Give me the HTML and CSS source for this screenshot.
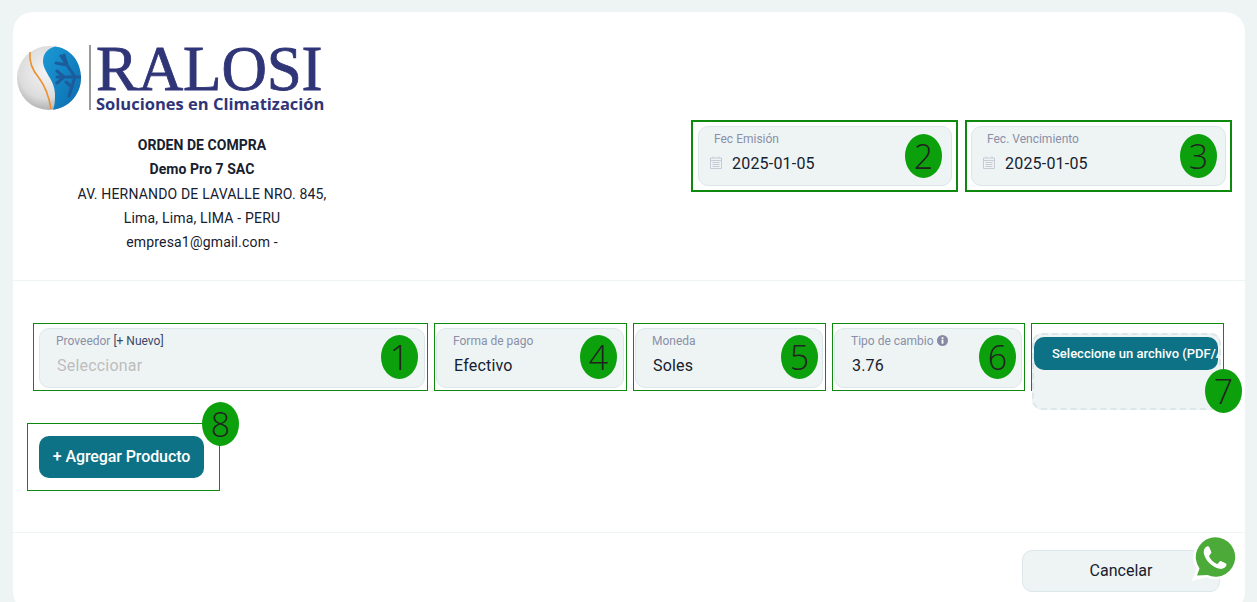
FILE: index.html
```html
<!DOCTYPE html>
<html lang="es">
<head>
  <meta charset="UTF-8">
  <meta name="viewport" content="width=device-width, initial-scale=1.0">
  <title>Orden de compra</title>
  <link rel="stylesheet" href="styles.css">
</head>
<body>
  <div class="card">

    <!-- Cabecera -->
    <section class="header">
      <div class="company">
        <div class="logo">
          <svg class="logo-ball" viewBox="0 0 64 64" width="64" height="64">
            <defs>
              <radialGradient id="ballGrey" cx="0.45" cy="0.4" r="0.7">
                <stop offset="0" stop-color="#f4f4f4"/>
                <stop offset="0.6" stop-color="#dcdcdc"/>
                <stop offset="1" stop-color="#9a9a9a"/>
              </radialGradient>
              <linearGradient id="ballBlue" x1="0" y1="0" x2="1" y2="1">
                <stop offset="0" stop-color="#1a9ad6"/>
                <stop offset="1" stop-color="#0b6cae"/>
              </linearGradient>
            </defs>
            <circle cx="32" cy="32" r="32" fill="url(#ballGrey)"/>
            <path d="M38 0.5C30 3 26 8 26 15C26 26 38 34 38 48C38 54 38 59 36 63.7C52 62 64 48 64 32C64 15 53 2 38 0.5Z" fill="url(#ballBlue)"/>
            <path d="M13 6C12 16 15 24 22 32C28 40 32 50 34 63" fill="none" stroke="#ee8f2e" stroke-width="1.6"/>
            <g fill="none" stroke="#1d5c9c" stroke-width="3" stroke-linecap="round">
              <path d="M64 31L40 31M47 31L40 25M47 31L40 37"/>
              <path d="M58 31L44 10M50 19L39 17M50 19L47 9"/>
              <path d="M58 31L52 50M55 41L49 36"/>
            </g>
          </svg>
          <div class="logo-bar"></div>
          <div class="logo-text">
            <div class="logo-name">RALOSI</div>
            <div class="logo-slogan">Soluciones en Climatización</div>
          </div>
        </div>
        <div class="company-info">
          <div class="strong">ORDEN DE COMPRA</div>
          <div class="strong">Demo Pro 7 SAC</div>
          <div>AV. HERNANDO DE LAVALLE NRO. 845,</div>
          <div>Lima, Lima, LIMA - PERU</div>
          <div>empresa1@gmail.com -</div>
        </div>
      </div>

      <div class="dates">
        <div class="mark mark-thick">
          <div class="field">
            <label class="field-label date-label">Fec Emisión</label>
            <div class="field-value date-value">
              <svg class="cal-icon" viewBox="0 0 12 13" width="12" height="13">
                <path d="M0.5 2H11.500V12.500H0.5ZM0.5 4.500H11.500M3 0.5V2M9 0.5V2M2.500 6.500H9.500M2.500 8.500H9.500M2.500 10.500H9.500" fill="none" stroke="#c6cbd6" stroke-width="1"/>
              </svg>
              2025-01-05
            </div>
          </div>
          <span class="badge badge-2">2</span>
        </div>
        <div class="mark mark-thick mark-last">
          <div class="field">
            <label class="field-label date-label">Fec. Vencimiento</label>
            <div class="field-value date-value">
              <svg class="cal-icon" viewBox="0 0 12 13" width="12" height="13">
                <path d="M0.5 2H11.500V12.500H0.5ZM0.5 4.500H11.500M3 0.5V2M9 0.5V2M2.500 6.500H9.500M2.500 8.500H9.500M2.500 10.500H9.500" fill="none" stroke="#c6cbd6" stroke-width="1"/>
              </svg>
              2025-01-05
            </div>
          </div>
          <span class="badge badge-3">3</span>
        </div>
      </div>
    </section>

    <!-- Formulario -->
    <section class="form">
      <div class="form-row">
        <div class="mark mark-wide">
          <div class="field">
            <label class="field-label">Proveedor <a class="new-link">[+ Nuevo]</a></label>
            <div class="field-value placeholder">Seleccionar</div>
          </div>
          <span class="badge badge-1">1</span>
        </div>
        <div class="mark">
          <div class="field">
            <label class="field-label">Forma de pago</label>
            <div class="field-value">Efectivo</div>
          </div>
          <span class="badge badge-4">4</span>
        </div>
        <div class="mark">
          <div class="field">
            <label class="field-label">Moneda</label>
            <div class="field-value">Soles</div>
          </div>
          <span class="badge badge-5">5</span>
        </div>
        <div class="mark">
          <div class="field">
            <label class="field-label">Tipo de cambio
              <svg class="info-icon" viewBox="0 0 12 12" width="11" height="11">
                <circle cx="6" cy="6" r="6" fill="#868ba3"/>
                <rect x="5" y="5" width="2" height="4.500" fill="#fff"/>
                <rect x="5" y="2.400" width="2" height="1.800" fill="#fff"/>
              </svg>
            </label>
            <div class="field-value">3.76</div>
          </div>
          <span class="badge badge-6">6</span>
        </div>
        <div class="mark">
          <div class="dropzone">
            <button class="file-btn"><span class="file-btn-text">Seleccione un archivo (PDF/A4)</span></button>
          </div>
          <span class="badge badge-7">7</span>
        </div>
      </div>

      <div class="mark mark-add">
        <button class="add-btn">+ Agregar Producto</button>
        <span class="badge badge-8">8</span>
      </div>
    </section>

    <!-- Pie -->
    <section class="footer">
      <button class="cancel-btn">Cancelar</button>
    </section>
  </div>

  <svg class="whatsapp" viewBox="0 0 48 50" width="48" height="50">
    <path d="M1.500 48L6.600 35.700A22.200 22.200 0 1 1 16.500 44.300Z" fill="#fff"/>
    <path d="M7 42.500L9.500 35.500A19.700 19.700 0 1 1 17.500 42Z" fill="#4caa38"/>
    <path transform="translate(25 24.500) scale(1.15) translate(-23 -22)" d="M16 12.500C14 13.500 12.800 15.500 13.300 18.500C14.500 24.500 20.500 30.500 27 31.800C30 32.300 32.300 30.800 33 28.600C33.200 28 33 27.500 32.500 27.200L28.500 25.200C28 25 27.500 25 27.100 25.500L25.600 27.300C25.200 27.700 24.800 27.800 24.300 27.500C21.800 26.300 19.400 24 18 21.300C17.800 20.800 17.800 20.400 18.200 20L19.500 18.500C19.900 18 20 17.600 19.700 17L18 13C17.700 12.300 16.800 12.100 16 12.500Z" fill="#fff"/>
  </svg>
</body>
</html>
```

FILE: styles.css
```css
html, body {
  height: 100%;
  overflow: hidden;
}

body {
  margin: 0;
  padding: 12px 12px 0 13px;
  box-sizing: border-box;
  background-color: #eef4f4;
  font-family: Roboto, "Liberation Sans", sans-serif;
  color: #16202e;
}

.card {
  background-color: #fff;
  border-radius: 20px;
  height: 600px;
}

/* Cabecera */
.header {
  display: flex;
  justify-content: space-between;
  height: 268px;
  border-bottom: 1px solid #eef4f4;
  padding-right: 13px;
}

.company {
  width: 370px;
  margin-left: 4px;
  padding-top: 33px;
}

.logo {
  display: flex;
  height: 68px;
  color: #2f3577;
}

.logo-ball {
  margin-top: 1px;
}

.logo-bar {
  width: 2px;
  height: 65px;
  margin-left: 8px;
  background-color: #9a9a9a;
}

.logo-text {
  margin-left: 5px;
}

.logo-name {
  font-family: "Liberation Serif", serif;
  font-size: 63px;
  line-height: 49px;
  height: 50px;
  letter-spacing: -0.2px;
  -webkit-text-stroke: 0.8px #2f3577;
}

.logo-slogan {
  font-family: "Open Sans", sans-serif;
  font-size: 16.5px;
  font-weight: 700;
  line-height: 17px;
}

.company-info {
  margin-top: 20px;
  text-align: center;
  font-size: 14px;
  line-height: 24.25px;
  letter-spacing: 0.18px;
}

.strong {
  font-weight: 700;
  letter-spacing: 0.05px;
}

.dates {
  display: flex;
  gap: 7px;
  padding-top: 108px;
}

/* Marcas verdes */
.mark {
  position: relative;
  box-sizing: border-box;
  width: 193px;
  height: 68px;
  border: 1px solid #0d8a0d;
  padding: 4px 2px 2px 1px;
}

.mark-wide {
  width: 395px;
  padding-left: 5px;
}

.mark-thick {
  width: 267px;
  height: 72px;
  border-width: 2px;
  padding: 4px 4px 4px 5px;
}

.mark-last {
  padding-left: 4px;
}

.mark-add {
  margin: 32px 0 0 14px;
  padding: 12px 0 0 11px;
}

.badge {
  position: absolute;
  width: 37px;
  height: 44px;
  border-radius: 50%;
  background-color: #0ca00c;
  color: #222;
  font-family: "Open Sans", sans-serif;
  font-size: 34px;
  font-weight: 300;
  line-height: 44px;
  text-align: center;
}

.badge-1 { top: 11px; right: 9px; }
.badge-2 { top: 12px; right: 14px; }
.badge-3 { top: 12px; right: 13px; }
.badge-4 { top: 11px; right: 9px; }
.badge-5 { top: 11px; right: 7px; }
.badge-6 { top: 11px; right: 8px; }
.badge-7 { top: 45px; right: -19px; }
.badge-8 { top: -22px; right: -20px; }

/* Campos */
.field {
  box-sizing: border-box;
  height: 60px;
  background-color: #eef4f4;
  border: 1px solid #dbe7e8;
  border-radius: 10px;
  padding: 4px 16px 0;
}

.field-label {
  display: block;
  font-size: 12px;
  line-height: 16px;
  color: #8a8fa8;
}

.date-label {
  margin-left: -1px;
}

.new-link {
  color: #3a4766;
}

.info-icon {
  vertical-align: -1px;
}

.field-value {
  margin: 5px 0 0 1px;
  font-size: 16px;
  line-height: 24px;
  letter-spacing: 0.2px;
  color: #16202e;
}

.placeholder {
  color: #bdbdbd;
}

.date-value {
  display: flex;
  align-items: center;
  margin-left: -5px;
}

.cal-icon {
  margin: 0 10px 3px 0;
}

.form {
  height: 209px;
  border-bottom: 1px solid #eef4f4;
  padding-top: 42px;
}

.form-row {
  display: flex;
  gap: 6px;
  margin-left: 20px;
}

/* Adjuntar archivo */
.dropzone {
  box-sizing: border-box;
  width: 189px;
  height: 77px;
  margin: 5px 0 0 -1px;
  border: 2px dashed #dbe7e8;
  border-radius: 10px;
  background-color: #eef4f4;
  overflow: hidden;
}

.file-btn {
  display: block;
  box-sizing: border-box;
  width: 184px;
  height: 33px;
  margin-top: 2px;
  padding: 0 0 0 18px;
  border: none;
  border-radius: 10px;
  background-color: #0d7286;
  overflow: hidden;
  text-align: left;
}

.file-btn-text {
  color: #fff;
  font-family: Roboto, sans-serif;
  font-size: 13px;
  font-weight: 500;
  white-space: nowrap;
}

/* Botones */
.add-btn {
  width: 165px;
  height: 42px;
  padding: 0 0 2px;
  border: none;
  border-radius: 10px;
  background-color: #0d7286;
  color: #fff;
  font-family: inherit;
  font-size: 16px;
  font-weight: 500;
  letter-spacing: -0.1px;
}

.footer {
  display: flex;
  justify-content: flex-end;
  padding: 17px 25px 0 0;
}

.cancel-btn {
  width: 198px;
  height: 42px;
  padding: 0 0 2px;
  border: 1px solid #dbe7e8;
  border-radius: 10px;
  background-color: #eef4f4;
  color: #16202e;
  font-family: inherit;
  font-size: 16px;
}

.whatsapp {
  position: fixed;
  top: 533px;
  left: 1190px;
}
```
